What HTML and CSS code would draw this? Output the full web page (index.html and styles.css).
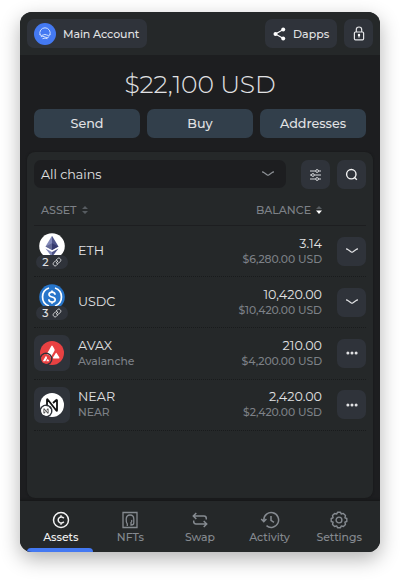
FILE: index.html
```html
<!DOCTYPE html>
<html lang="en">
<head>
<meta charset="utf-8">
<title>Wallet</title>
<link rel="stylesheet" href="styles.css">
</head>
<body>
<svg class="defs" width="0" height="0">
  <symbol id="link" viewBox="0 0 12 12"><path d="M5 7 L7.2 4.8 M5 3.6 L6.8 1.8 C8.7 0 11.9 3.2 10.1 5.1 L8 7.2 C7 8.1 5.7 7.8 5 7 M7 8.3 L5.2 10.1 C3.3 12 .1 8.8 1.9 6.9 L4 4.8 C5 3.9 6.3 4.2 7 5" fill="none" stroke="currentColor" stroke-width="1.1"/></symbol>
  <symbol id="chevron" viewBox="0 0 14 8"><path d="M1 1.8 Q2.2 1.8 3.2 2.7 L6.3 5 Q7 5.5 7.7 5 L10.8 2.7 Q11.8 1.8 13 1.8" fill="none" stroke="currentColor" stroke-width="1.2"/></symbol>
  <symbol id="dots" viewBox="0 0 12 4"><g fill="currentColor"><circle cx="1.9" cy="2" r="1.5"/><circle cx="6" cy="2" r="1.5"/><circle cx="10.1" cy="2" r="1.5"/></g></symbol>
  <symbol id="avax" viewBox="0 0 24 24"><circle cx="12" cy="12" r="12" fill="#e84142"/><path d="M11.2 5.2 Q12 4 12.8 5.2 L14.4 8.1 Q14.9 9.1 14.4 10.1 L10.6 16.6 Q10 17.5 9 17.5 H5.8 Q4.3 17.5 5 16.2 Z M15.5 12.4 Q16.2 11.3 16.9 12.4 L19.3 16.3 Q19.9 17.5 18.6 17.5 H13.7 Q12.4 17.5 13.1 16.3 Z" fill="#fff"/></symbol>
  <symbol id="near" viewBox="0 0 24 24"><circle cx="12" cy="12" r="12" fill="#fff"/><path d="M7 17.5 V6.8 Q7 5.6 7.9 6.8 L16.1 17.2 Q17 18.4 17 17.2 V6.5 M7 17.5 L11 14 M17 6.5 L13 10" fill="none" stroke="#111" stroke-width="1.8"/></symbol>
</svg>
<div class="window">
  <header class="topbar">
    <div class="pill account">
      <svg width="22" height="22" viewBox="0 0 22 22"><circle cx="11" cy="11" r="11" fill="#4479f2"/><g fill="none" stroke="#cfe0ff" stroke-width="1"><path d="M6.2 12 A5.2 5.2 0 1 1 15.8 12"/><path d="M5.5 11.6 Q7.5 13.2 9.2 12 T12.8 12 T16.5 11.6 M6.8 13.8 Q8.8 12.6 11 14 T15.2 13.7 M8.5 15.7 Q11 14.5 13.5 15.7"/></g></svg>
      <span>Main Account</span>
    </div>
    <div class="pill dapps">
      <svg width="13" height="14" viewBox="0 0 13 14"><path d="M10.4 2.4 L2.4 7 L10.4 11.4" fill="none" stroke="#fff" stroke-width="1.1"/><g fill="#fff"><circle cx="10.2" cy="2.5" r="2"/><circle cx="2.5" cy="7" r="2"/><circle cx="10.2" cy="11.4" r="2"/></g></svg>
      <span>Dapps</span>
    </div>
    <div class="pill icon-button">
      <svg width="12" height="15" viewBox="0 0 12 15"><g fill="none" stroke="#e4e5e7" stroke-width="1.2"><rect x="1.4" y="6" width="9.2" height="7.8" rx="1"/><path d="M3.3 6 V3.7 A2.7 2.7 0 0 1 8.7 3.7 V6"/></g><circle cx="6" cy="9" r="1.2" fill="#fff"/><path d="M6 9 V11.6" stroke="#fff"/></svg>
    </div>
  </header>
  <main class="content">
    <div class="total">$22,100 USD</div>
    <div class="actions"><div class="action">Send</div><div class="action">Buy</div><div class="action">Addresses</div></div>
    <section class="panel">
      <div class="filters">
        <div class="select"><span>All chains</span><svg width="14" height="8"><use href="#chevron"/></svg></div>
        <div class="pill icon-button"><svg width="13" height="12" viewBox="0 0 13 12"><g fill="none" stroke="#d6d8db" stroke-width="1"><path d="M1 2 H6.6 M9.6 2 H12 M1 6 H2.4 M5.4 6 H12 M1 10 H6.6 M9.6 10 H12"/><circle cx="8.1" cy="2" r="1.4"/><circle cx="3.9" cy="6" r="1.4"/><circle cx="8.1" cy="10" r="1.4"/></g></svg></div>
        <div class="pill icon-button"><svg width="13" height="13" viewBox="0 0 13 13"><g fill="none" stroke="#f2f2f2" stroke-width="1.4"><circle cx="6.3" cy="6.2" r="4.7"/><path d="M9 9 L11.8 11.8"/></g></svg></div>
      </div>
      <div class="columns">
        <div class="column"><span>ASSET</span><svg width="6" height="8" viewBox="0 0 6 8"><path d="M0 3 L3 0 L6 3Z M0 5 L3 8 L6 5Z" fill="#575c61"/></svg></div>
        <div class="column balance"><span>BALANCE</span><svg width="6" height="8" viewBox="0 0 6 8"><path d="M0 3 L3 0 L6 3Z" fill="#575c61"/><path d="M0 4.5 H6 L3 8Z" fill="#fff"/></svg></div>
      </div>
      <div class="row">
        <div class="logo"><svg class="coin" width="26" height="26" viewBox="0 0 26 26"><circle cx="13" cy="13" r="12.8" fill="#fff"/><path d="M13 2.8 L6.5 13.4 L13 17Z" fill="#8188b8"/><path d="M13 2.8 L19.5 13.4 L13 17Z" fill="#4d5388"/><path d="M13 10.3 L6.5 13.4 L13 17Z" fill="#626894"/><path d="M13 10.3 L19.5 13.4 L13 17Z" fill="#35396d"/><path d="M6.5 15.5 L13 19 V24Z" fill="#8188b8"/><path d="M19.5 15.5 L13 19 V24Z" fill="#4d5388"/></svg><div class="badge">2<svg width="10" height="10"><use href="#link"/></svg></div></div>
        <div class="name"><b>ETH</b></div>
        <div class="amount"><b>3.14</b><small>$6,280.00 USD</small></div>
        <div class="pill icon-button"><svg width="14" height="8"><use href="#chevron"/></svg></div>
      </div>
      <div class="row">
        <div class="logo"><svg class="coin" width="26" height="26" viewBox="0 0 26 26"><circle cx="13" cy="13" r="12.8" fill="#2775ca"/><g fill="none" stroke="#fff" stroke-width="1.7"><path d="M10 4 A9.5 9.5 0 0 0 10 22 M16 4 A9.5 9.5 0 0 1 16 22 M16.1 10.7 C16 7.2 10 7.3 10 10.5 C10 14 16.2 12 16.2 15.7 C16.2 19 9.8 18.9 9.8 15.3 M13 6.5 V8.3 M13 17.9 V19.8"/></g></svg><div class="badge">3<svg width="10" height="10"><use href="#link"/></svg></div></div>
        <div class="name"><b>USDC</b></div>
        <div class="amount"><b>10,420.00</b><small>$10,420.00 USD</small></div>
        <div class="pill icon-button"><svg width="14" height="8"><use href="#chevron"/></svg></div>
      </div>
      <div class="row">
        <div class="logo tile"><svg width="24" height="24"><use href="#avax"/></svg><svg class="mini" width="10" height="10"><use href="#avax"/></svg></div>
        <div class="name"><b>AVAX</b><small>Avalanche</small></div>
        <div class="amount"><b>210.00</b><small>$4,200.00 USD</small></div>
        <div class="pill icon-button"><svg width="12" height="4"><use href="#dots"/></svg></div>
      </div>
      <div class="row">
        <div class="logo tile"><svg width="24" height="24"><use href="#near"/></svg><svg class="mini" width="10" height="10"><use href="#near"/></svg></div>
        <div class="name"><b>NEAR</b><small>NEAR</small></div>
        <div class="amount"><b>2,420.00</b><small>$2,420.00 USD</small></div>
        <div class="pill icon-button"><svg width="12" height="4"><use href="#dots"/></svg></div>
      </div>
    </section>
  </main>
  <nav class="tabs">
    <div class="tab active"><svg width="18" height="18" viewBox="0 0 18 18"><g fill="none" stroke="currentColor" stroke-width="1.5"><circle cx="9" cy="9" r="7.5"/><path d="M11.8 7.2 A3.1 3.1 0 1 0 11.8 10.8 M9 4.3 V6 M9 12 V13.7"/></g></svg><span>Assets</span></div>
    <div class="tab"><svg width="18" height="18" viewBox="0 0 18 18"><g fill="none" stroke="currentColor" stroke-width="1.3"><path d="M2 1.5 H16 V16.5 H2Z"/><path d="M6.3 15 V13 Q5 11.5 5.2 8 Q5.5 4 9 4 Q12.8 4 12.8 8 V12 Q12.8 14 10 14 V11.5 Q11 11 10.7 8.8"/></g></svg><span>NFTs</span></div>
    <div class="tab"><svg width="18" height="18" viewBox="0 0 18 18"><path d="M5.3 2 L2.3 5 L5.3 8 M2.5 5 H13 Q15.3 5 15.3 7.4 V8.5 M12.7 10 L15.7 13 L12.7 16 M15.5 13 H5 Q2.7 13 2.7 10.6 V9.5" fill="none" stroke="currentColor" stroke-width="1.5"/></svg><span>Swap</span></div>
    <div class="tab"><svg width="20" height="18" viewBox="0 0 20 18"><path d="M3.8 10.5 V9 A7.4 7.4 0 1 1 6.5 14.7 M1.2 8 L3.8 10.6 L6.4 8 M11 5 V9.4 L14 11.3" fill="none" stroke="currentColor" stroke-width="1.5"/></svg><span>Activity</span></div>
    <div class="tab"><svg width="18" height="18" viewBox="0 0 18 18"><g fill="none" stroke="currentColor" stroke-width="1.4" stroke-linejoin="round"><path d="M7.5 1.2 H10.5 L11.2 3 L13.3 2.4 L15.5 4.6 L14.9 6.8 L16.8 7.5 V10.5 L14.9 11.2 L15.5 13.4 L13.4 15.5 L11.2 14.9 L10.5 16.8 H7.5 L6.8 14.9 L4.6 15.5 L2.5 13.4 L3.1 11.2 L1.2 10.5 V7.5 L3.1 6.8 L2.5 4.6 L4.6 2.5 L6.8 3.1Z"/><circle cx="9" cy="9" r="2.9"/></g></svg><span>Settings</span></div>
  </nav>
</div>
</body>
</html>
```
FILE: styles.css
```css
* { box-sizing: border-box; }
body {
  margin: 0;
  padding: 12px 20px 28px;
  background: #fff;
  font-family: Montserrat, Inter, "Open Sans", sans-serif;
  color: #e1e2e4;
}
svg { display: block; flex: none; }
.defs { position: absolute; }
.window {
  width: 360px;
  height: 540px;
  display: flex;
  flex-direction: column;
  background: #1d1e20;
  border-radius: 12px;
  overflow: hidden;
  box-shadow: 0 7px 20px rgba(0, 0, 0, .3);
}
.topbar {
  height: 43px;
  flex: none;
  display: flex;
  align-items: center;
  gap: 7px;
  padding: 0 7px;
  background: #252829;
}
.pill {
  height: 29px;
  display: flex;
  align-items: center;
  background: #2f333a;
  border-radius: 7px;
  font-size: 11px;
  font-weight: 500;
}
.account { width: 120px; padding-left: 7px; gap: 7px; margin-right: auto; letter-spacing: -.1px; white-space: nowrap; }
.dapps { width: 72px; padding-left: 8px; gap: 7px; }
.icon-button { width: 29px; flex: none; justify-content: center; }
.content { flex: 1; display: flex; flex-direction: column; padding: 0 7px 3px; }
.total {
  height: 54px;
  line-height: 58px;
  text-align: center;
  font-size: 25px;
  font-weight: 300;
  letter-spacing: -.1px;
  white-space: nowrap;
}
.actions { display: flex; gap: 7px; padding: 0 7px; }
.action {
  flex: 1;
  height: 29px;
  line-height: 29px;
  text-align: center;
  background: #323f4b;
  border-radius: 7px;
  font-size: 12.7px;
  font-weight: 500;
}
.panel {
  height: 346px;
  margin-top: 14px;
  padding: 8px 7px;
  background: #252829;
  border-radius: 8px;
  box-shadow: 0 0 2px #151617;
}
.filters { display: flex; gap: 7px; }
.select {
  width: 252px;
  height: 28px;
  margin-right: 8px;
  padding: 0 11px 0 7px;
  display: flex;
  align-items: center;
  justify-content: space-between;
  background: #1d1e20;
  border-radius: 7px;
  font-size: 12.7px;
}
.select svg { color: #8d9196; }
.columns {
  height: 37px;
  display: flex;
  align-items: center;
  justify-content: space-between;
  padding: 6px 44px 1px 7px;
  border-bottom: 1px solid #1d1e20;
  color: #7d8187;
  font-size: 11px;
  font-weight: 500;
}
.column { display: flex; align-items: center; gap: 5px; }
.row {
  height: 51.2px;
  display: flex;
  align-items: center;
  border-bottom: 1px dotted #191b1c;
}
.logo { position: relative; width: 36px; height: 36px; flex: none; }
.coin { margin: 0 auto; }
.badge {
  position: absolute;
  left: 2px;
  top: 22px;
  width: 32px;
  height: 14px;
  display: flex;
  align-items: center;
  justify-content: center;
  gap: 3px;
  background: #2f333a;
  border-radius: 7px;
  font-size: 11px;
  font-weight: 500;
}
.tile { display: flex; align-items: center; justify-content: center; background: #2f333a; border-radius: 7px; }
.mini { position: absolute; left: 7px; top: 19px; border-radius: 50%; box-shadow: 0 0 0 1.5px #2f333a; }
.name { flex: 1; padding-left: 8px; }
.amount { padding-right: 15px; text-align: right; }
.row b { display: block; font-size: 12.7px; font-weight: 400; line-height: 16px; }
.row small { display: block; font-size: 10.8px; font-weight: 500; line-height: 15px; color: #7d8187; letter-spacing: -.05px; }
.tabs {
  height: 51px;
  flex: none;
  display: flex;
  padding: 0 6px;
  background: #252829;
  box-shadow: 0 -1px 2px #151617;
}
.tab {
  position: relative;
  flex: 1;
  display: flex;
  flex-direction: column;
  align-items: center;
  padding-top: 10px;
  gap: 1px;
  color: #858a90;
  font-size: 10.9px;
  font-weight: 500;
  line-height: 15px;
}
.tab span { letter-spacing: -.05px; }
.tab.active { color: #f2f2f2; }
.tab.active::after {
  content: "";
  position: absolute;
  left: 1px;
  bottom: 0;
  width: 66px;
  height: 4px;
  border-radius: 4px 4px 0 0;
  background: #4479f2;
}
```
